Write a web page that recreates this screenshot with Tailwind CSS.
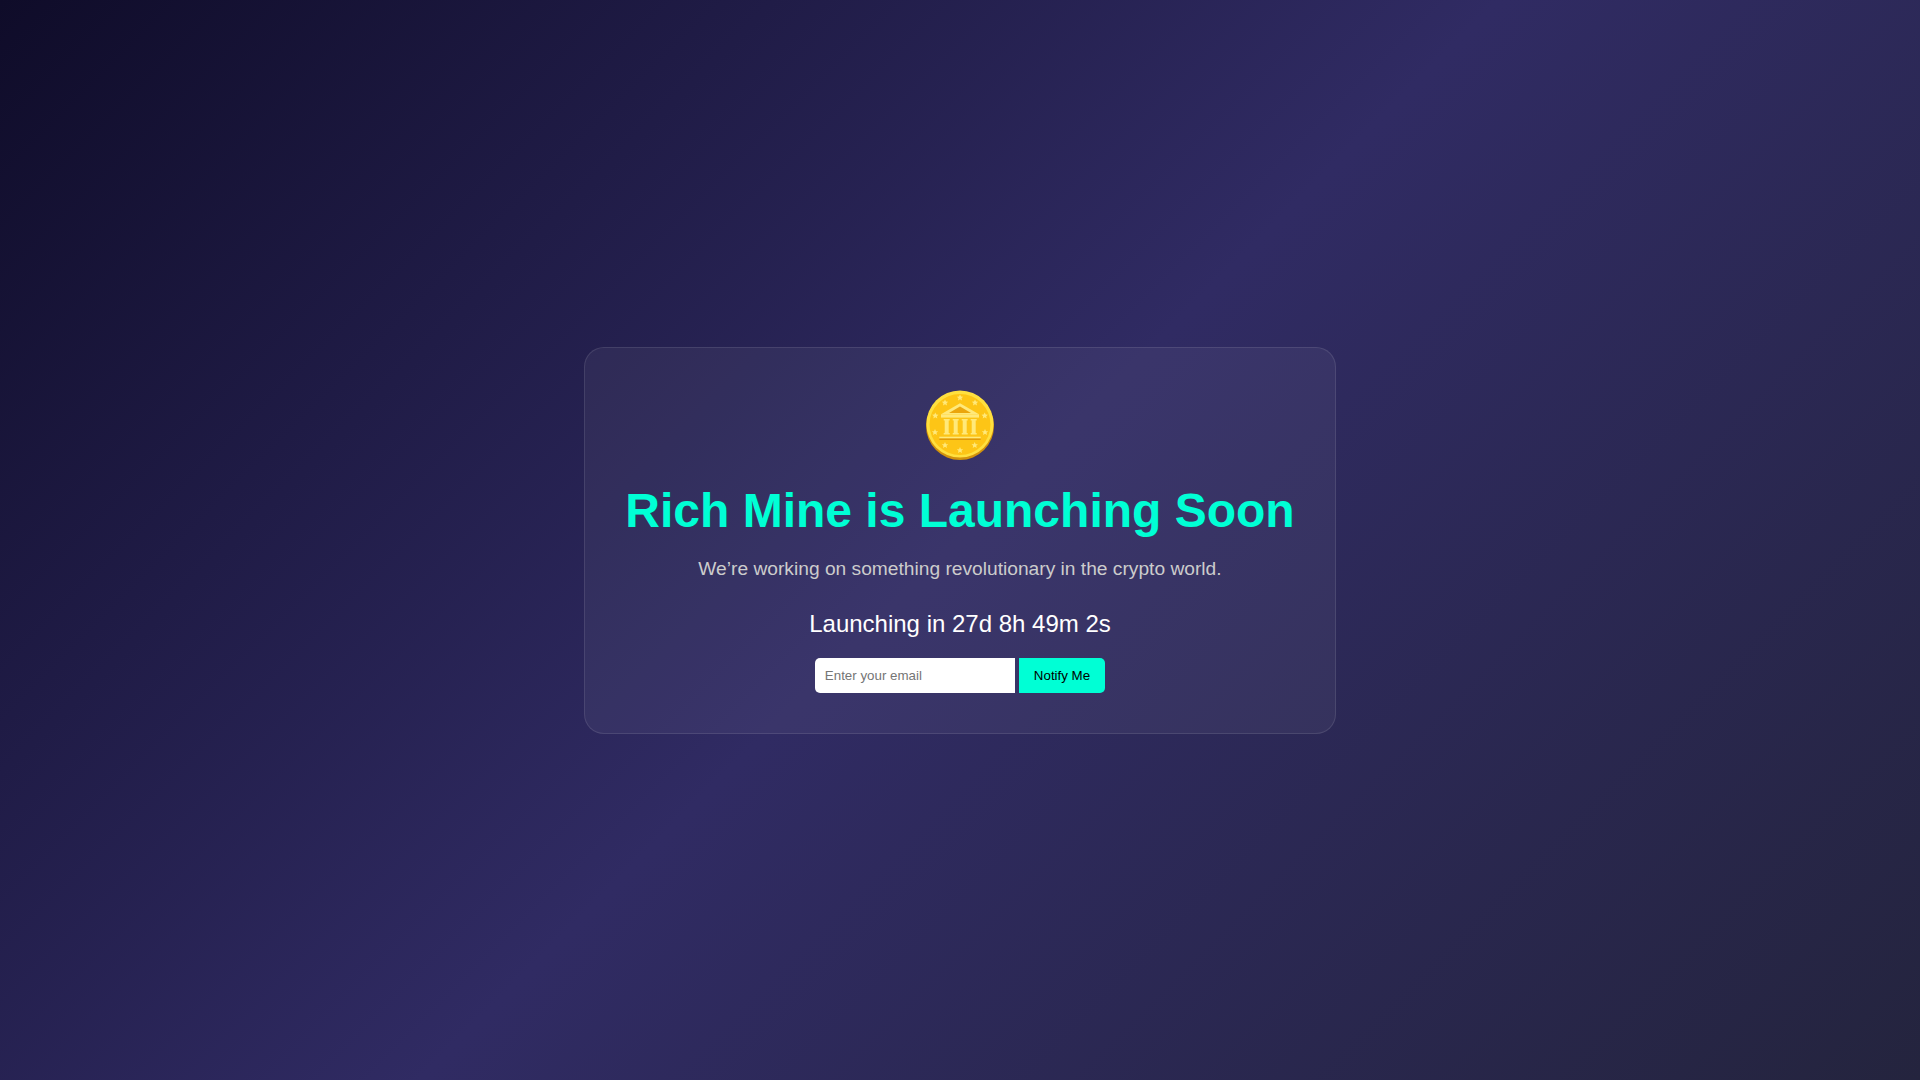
<!DOCTYPE html>
<html lang="en">
<head>
  <meta charset="UTF-8">
  <meta name="viewport" content="width=device-width, initial-scale=1.0">
  <title>Rich Mine</title>
  <script src="https://cdn.jsdelivr.net/npm/@tailwindcss/browser@4"></script>
</head>
<body class="h-screen flex items-center justify-center bg-[linear-gradient(135deg,#0f0c29,#302b63,#24243e)] font-['Liberation_Sans',Arial,sans-serif] text-white">
  <div class="text-center p-10 rounded-[20px] bg-white/5 border border-white/10">
    <!-- Coin -->
    <svg class="block mx-auto mb-[15px] w-20 h-20" viewBox="0 0 80 80">
      <defs>
        <polygon id="star" points="0,-3.2 1,-1.1 3.2,-1 1.5,0.5 2,2.8 0,1.5 -2,2.8 -1.5,0.5 -3.2,-1 -1,-1.1" fill="#ffe97a"/>
      </defs>
      <circle cx="40" cy="38" r="34" fill="#d2920c"/>
      <circle cx="40" cy="36" r="33.6" fill="#ffe03f"/>
      <circle cx="40" cy="36.5" r="30.5" fill="#fdc516"/>
      <g transform="translate(0 -1)">
        <use href="#star" x="40" y="10.7"/>
        <use href="#star" x="55" y="15.7"/>
        <use href="#star" x="64.7" y="28.7"/>
        <use href="#star" x="65" y="45.3"/>
        <use href="#star" x="54.7" y="58.3"/>
        <use href="#star" x="40" y="63.3"/>
        <use href="#star" x="25" y="58.3"/>
        <use href="#star" x="15" y="45.3"/>
        <use href="#star" x="15.3" y="28.7"/>
        <use href="#star" x="25" y="15.7"/>
        <polygon points="40,16.3 59,27.3 21,27.3" fill="#ffe97a"/>
        <polygon points="40,19.5 51,26 29,26" fill="#eba60c"/>
        <rect x="21" y="27.3" width="38" height="3.3" fill="#ffe97a"/>
        <path d="M23.7 32h6v1.4h-1v12.6h1v1.4h-6V46h1V33.4h-1zM32.7 32h6v1.4h-1v12.6h1v1.4h-6V46h1V33.4h-1zM41.7 32h6v1.4h-1v12.6h1v1.4h-6V46h1V33.4h-1zM50.7 32h6v1.4h-1v12.6h1v1.4h-6V46h1V33.4h-1z" fill="#ffe97a"/>
        <rect x="19.3" y="49.7" width="41.4" height="1.8" fill="#ffe97a"/>
        <rect x="19.3" y="51.5" width="41.4" height="1.5" fill="#e09a0a"/>
      </g>
    </svg>
    <h1 class="text-5xl leading-[55px] font-bold text-[#00ffd5] mb-5">Rich Mine is Launching Soon</h1>
    <p class="text-[19.2px] leading-[22px] text-[#ccc] mb-[30px]">We’re working on something revolutionary in the crypto world.</p>
    <div class="text-2xl leading-[28px] mb-[20px]">Launching in 27d 8h 49m 2s</div>
    <form class="flex justify-center gap-1">
      <input type="email" placeholder="Enter your email" class="w-[200px] h-[35px] px-2.5 bg-white text-[13.33px] text-black placeholder:text-[#757575] rounded-l-[5px] outline-none">
      <button type="button" class="h-[35px] pt-px px-[15px] bg-[#00ffd5] text-[13.33px] text-black rounded-r-[5px]">Notify Me</button>
    </form>
  </div>
</body>
</html>
